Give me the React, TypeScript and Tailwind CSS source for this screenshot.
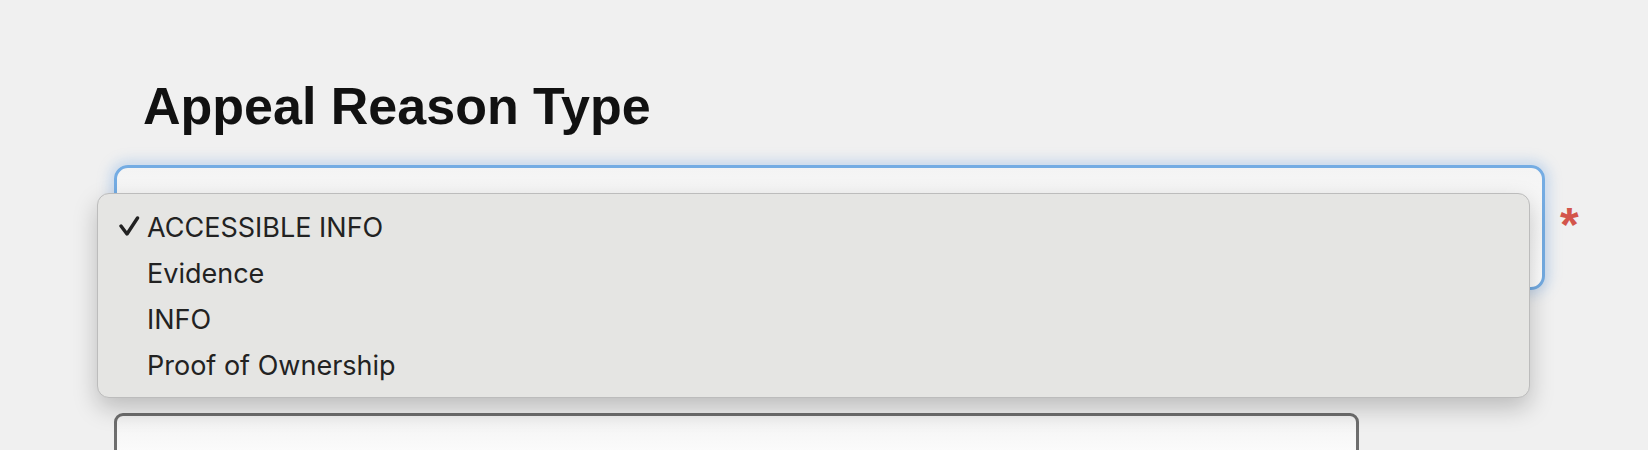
import React from "react";

const items = ["ACCESSIBLE INFO", "Evidence", "INFO", "Proof of Ownership"];

export default function App() {
  return (
    <div
      className="relative min-h-screen bg-[#f0f0f0] pl-[114px] pt-[76px]"
      style={{ fontFamily: '"Liberation Sans", Arial, sans-serif' }}
    >
      <h1 className="ml-[29px] text-[52px] leading-[60px] font-bold text-[#111111]">
        Appeal Reason Type
      </h1>

      <div className="mt-[29px] flex items-start">
        <div className="h-[125px] w-[1431px] rounded-[14px] border-[3px] border-[#74ace3] bg-gradient-to-b from-[#f4f4f4] to-white shadow-[0_0_12px_5px_rgba(130,175,230,0.35)]" />
        <span className="ml-[15px] mt-[36px] text-[48px] leading-[48px] font-bold text-[#d3554b]">
          *
        </span>
      </div>

      <div className="mt-[123px] h-[60px] w-[1245px] rounded-[9px] border-[3px] border-[#6e6e6e] bg-gradient-to-b from-[#f3f3f3] to-white" />

      <div className="absolute left-[97px] top-[193px] w-[1433px] h-[205px] rounded-[12px] border border-[#bcbcbc] bg-[#e5e5e3] pt-[11px] shadow-[0_10px_24px_rgba(0,0,0,0.22)]">
        {items.map((it, i) => (
          <div
            key={it}
            className="relative flex h-[46px] items-center pl-[49px] text-[27px] leading-[46px] text-[#222222]"
            style={{ fontFamily: "Inter, 'Liberation Sans', sans-serif" }}
          >
            {i === 0 && (
              <svg
                className="absolute left-[21px] top-[11px]"
                width="22"
                height="22"
                viewBox="0 0 22 22"
              >
                <polyline
                  points="2,10 8,18 18.5,2"
                  fill="none"
                  stroke="#222222"
                  strokeWidth="3.4"
                  strokeLinecap="round"
                  strokeLinejoin="round"
                />
              </svg>
            )}
            {it}
          </div>
        ))}
      </div>
    </div>
  );
}
